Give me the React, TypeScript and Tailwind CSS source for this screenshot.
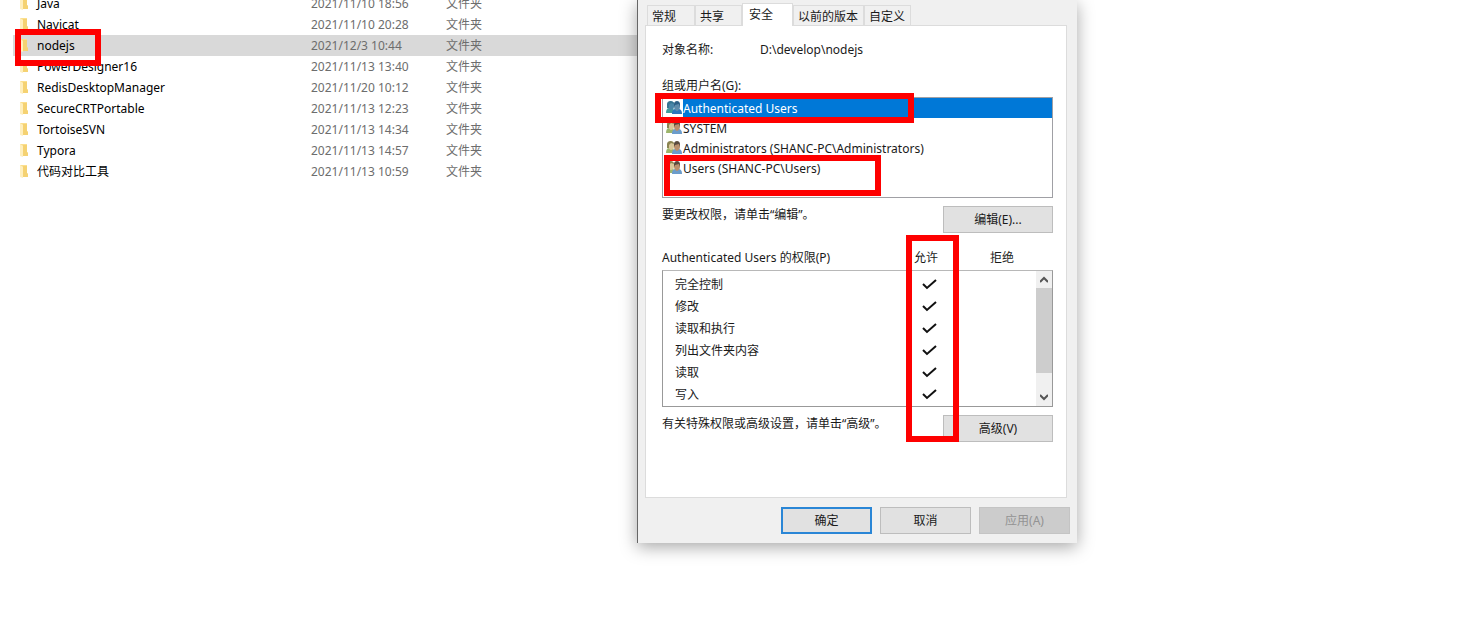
import { useState } from "react";

type FileRow = { name: string; date: string };

const files: FileRow[] = [
  { name: "Java", date: "2021/11/10 18:56" },
  { name: "Navicat", date: "2021/11/10 20:28" },
  { name: "nodejs", date: "2021/12/3 10:44" },
  { name: "PowerDesigner16", date: "2021/11/13 13:40" },
  { name: "RedisDesktopManager", date: "2021/11/20 10:12" },
  { name: "SecureCRTPortable", date: "2021/11/13 12:23" },
  { name: "TortoiseSVN", date: "2021/11/13 14:34" },
  { name: "Typora", date: "2021/11/13 14:57" },
  { name: "代码对比工具", date: "2021/11/13 10:59" },
];

const tabs = [
  { label: "常规", width: "w-12" },
  { label: "共享", width: "w-[47px]" },
  { label: "安全", width: "w-[51px]" },
  { label: "以前的版本", width: "w-[71px]" },
  { label: "自定义", width: "w-[47px]" },
];

const users = [
  "Authenticated Users",
  "SYSTEM",
  "Administrators (SHANC-PC\\Administrators)",
  "Users (SHANC-PC\\Users)",
];

const permissions = ["完全控制", "修改", "读取和执行", "列出文件夹内容", "读取", "写入"];

function FolderIcon() {
  return (
    <svg className="h-4 w-4 shrink-0" viewBox="0 0 16 16" aria-hidden="true">
      <path d="M3 1h7v8l1 1v3H3z" fill="#fbdf8e" />
      <path d="M6 2h4v7l1 1v3H6z" fill="#f5d272" />
      <path d="M3 1l3 2v11l-3-1z" fill="#ffefbe" />
    </svg>
  );
}

function UsersIcon({ selected }: { selected: boolean }) {
  return (
    <svg className="h-4 w-4 shrink-0" viewBox="0 0 16 16" aria-hidden="true">
      <path d="M0 13c0-3 1-5 3-5h4l2 5z" fill={selected ? "#3f9c9c" : "#9db56c"} />
      <path d="M2 3c0-2 6-2 6 0v4c0 2-2 3-3 3S2 8 2 6z" fill={selected ? "#4a86a8" : "#d9c79a"} />
      <path d="M1 8V4c0-4 7-4 7 0L5 3 3 5v3z" fill={selected ? "#357592" : "#8b8452"} />
      <path d="M6 14c0-3 1-5 4-5h2c3 0 4 2 4 5z" fill={selected ? "#2a78bd" : "#6b9ccb"} />
      <path d="M8 4h6v3c0 2-2 4-3 4S8 9 8 7z" fill={selected ? "#5f8cab" : "#b98f6d"} />
      <path d="M8 7V4c0-4 6-4 6 0v3l-1-3-4 1z" fill={selected ? "#2c5f86" : "#5a4a3e"} />
    </svg>
  );
}

function CheckMark() {
  return (
    <svg className="mx-auto h-4 w-4" viewBox="0 0 16 16" aria-label="允许">
      <path d="M1 7l4 4 9-8" fill="none" stroke="#111" strokeWidth="2" />
    </svg>
  );
}

function Explorer() {
  return (
    <div className="min-w-0 overflow-hidden pl-[13px]">
      <div className="relative -mt-[7px]">
        <table className="w-full table-fixed border-collapse text-left">
          <colgroup>
            <col className="w-[298px]" />
            <col className="w-[135px]" />
            <col />
          </colgroup>
          <tbody>
            {files.map((file) => (
              <tr key={file.name} className={`h-[21px] ${file.name === "nodejs" ? "bg-[#d9d9d9]" : ""}`}>
                <td className="p-0">
                  <div className="flex items-center gap-1 pl-1 text-black">
                    <FolderIcon />
                    <span>{file.name}</span>
                  </div>
                </td>
                <td className="p-0 text-[#6d6d6d]">{file.date}</td>
                <td className="p-0 text-[#6d6d6d]">文件夹</td>
              </tr>
            ))}
          </tbody>
        </table>
        {/* Highlight around the nodejs folder */}
        <div className="absolute top-9 left-0.5 h-[37px] w-[86px] border-6 border-[#fe0000]" />
      </div>
    </div>
  );
}

function PropertiesDialog() {
  const [activeTab, setActiveTab] = useState("安全");
  const [activeUser, setActiveUser] = useState(users[0]);

  return (
    <section className="relative z-10 border-l border-[#666] bg-[#f0f0f0] pr-[7px] pb-[9px] pl-[7px] text-[#1a1a1a] shadow-[0_4px_16px_rgba(0,0,0,0.35)]">
      {/* Tabs */}
      <div className="flex h-[25px] items-end pt-[3px] pl-0.5" role="tablist">
        {tabs.map((tab) => (
          <button
            key={tab.label}
            role="tab"
            aria-selected={tab.label === activeTab}
            onClick={() => setActiveTab(tab.label)}
            className={`${tab.width} border border-b-0 border-[#dcdcdc] text-left whitespace-nowrap ${
              tab.label === activeTab ? "relative z-10 -mb-px h-[23px] bg-white pl-1.5" : "h-5 bg-[#f0f0f0] pt-0.5 pl-1"
            }`}
          >
            {tab.label}
          </button>
        ))}
      </div>

      <div className="mr-[3px] min-h-[473px] border border-[#dcdcdc] bg-white pt-4 pr-[13px] pl-4">
        <div className="flex">
          <span className="w-[98px]">对象名称:</span>
          <span>D:\develop\nodejs</span>
        </div>

        <p className="mt-5" id="users-label">组或用户名(G):</p>
        <div className="relative mt-[3px]">
          <ul role="listbox" aria-labelledby="users-label" className="h-[101px] border border-[#a0a0a5]">
            {users.map((user) => (
              <li
                key={user}
                role="option"
                aria-selected={user === activeUser}
                onClick={() => setActiveUser(user)}
                className="flex h-5 items-center"
              >
                <span className="flex w-5 shrink-0 justify-end pr-px">
                  <UsersIcon selected={user === activeUser} />
                </span>
                <span
                  className={`h-full flex-1 pt-px leading-5 ${user === activeUser ? "bg-[#0078d7] text-white" : ""}`}
                >
                  {user}
                </span>
              </li>
            ))}
          </ul>
          {/* Highlights around the two user groups */}
          <div className="absolute -top-1 -left-[7px] h-[30px] w-[259px] border-6 border-[#fe0000]" />
          <div className="absolute top-[58px] left-0.5 h-[41px] w-[217px] border-6 border-[#fe0000]" />
        </div>

        <div className="mt-2 flex items-start justify-between">
          <p className="pt-px">要更改权限，请单击“编辑”。</p>
          <button className="h-[27px] w-[110px] border border-[#bdbdbd] bg-[#e1e1e1] pt-px">编辑(E)...</button>
        </div>

        <div className="relative">
          <div className="mt-[17px] flex">
            <p className="flex-1">Authenticated Users 的权限(P)</p>
            <span className="w-[76px]">允许</span>
            <span className="w-[63px]">拒绝</span>
          </div>
          <div className="mt-1 flex h-[137px] border border-[#999] border-t-[#b8b8b8]">
            <table className="mt-[3px] flex-1 self-start text-left">
              <tbody>
                {permissions.map((permission) => (
                  <tr key={permission} className="h-[22px]">
                    <td className="p-0 pl-3">{permission}</td>
                    <td className="w-[54px] p-0">
                      <CheckMark />
                    </td>
                    <td className="w-[79px] p-0" />
                  </tr>
                ))}
              </tbody>
            </table>
            <div className="flex w-4 flex-col bg-[#f0f0f0]">
              <button className="flex h-[17px] items-center justify-center" aria-label="向上滚动">
                <svg className="h-2 w-2" viewBox="0 0 8 8">
                  <path d="M0 6l4-4 4 4" fill="none" stroke="#555" strokeWidth="2" />
                </svg>
              </button>
              <div className="flex-1 bg-[#cdcdcd]" />
              <button className="mt-4 flex h-[17px] items-center justify-center" aria-label="向下滚动">
                <svg className="h-2 w-2" viewBox="0 0 8 8">
                  <path d="M0 1l4 4 4-4" fill="none" stroke="#555" strokeWidth="2" />
                </svg>
              </button>
            </div>
          </div>
          <div className="mt-2 flex items-start justify-between">
            <p className="pt-px">有关特殊权限或高级设置，请单击“高级”。</p>
            <button className="h-[27px] w-[110px] border border-[#bdbdbd] bg-[#e1e1e1] pt-px">高级(V)</button>
          </div>
          {/* Highlight around the allow column */}
          <div className="absolute -top-[15px] right-[94px] bottom-0 w-[53px] border-6 border-[#fe0000]" />
        </div>
      </div>

      <div className="mt-[9px] flex justify-end gap-2">
        <button className="h-[27px] w-[91px] border-2 border-[#2a86d6] bg-[#e1e1e1] pt-px">确定</button>
        <button className="h-[27px] w-[91px] border border-[#bdbdbd] bg-[#e1e1e1] pt-px">取消</button>
        <button disabled className="h-[27px] w-[91px] border border-[#c4c4c4] bg-[#cccccc] pt-px text-[#939393]">
          应用(A)
        </button>
      </div>
    </section>
  );
}

export default function App() {
  return (
    <div className="grid min-h-screen grid-cols-[637fr_440px_400fr] items-start overflow-hidden bg-white font-['Noto_Sans','Noto_Sans_CJK_SC',sans-serif] text-xs leading-4">
      <Explorer />
      <PropertiesDialog />
    </div>
  );
}
